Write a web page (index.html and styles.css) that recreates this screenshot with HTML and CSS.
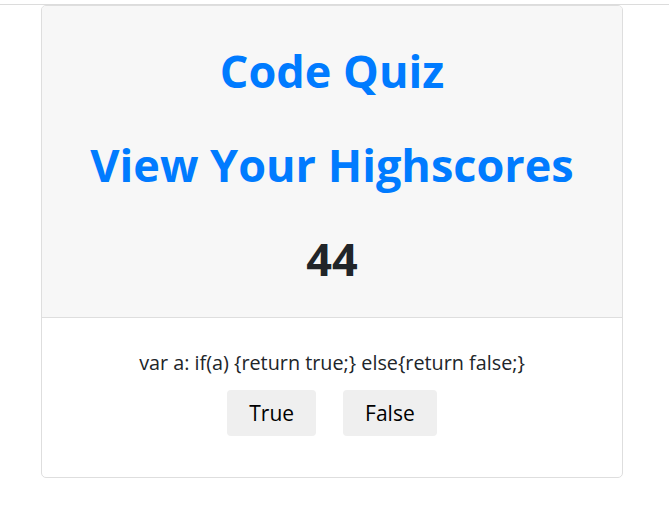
FILE: index.html
```html
<!DOCTYPE html>
<html>
<head>
<meta charset="utf-8">
<link rel="stylesheet" href="styles.css">
</head>
<body>
<div class="topbar"></div>
<div class="card">
  <div class="card-header">
    <h1 class="title">Code Quiz</h1>
    <h1 class="title">View Your Highscores</h1>
    <h1 class="score">44</h1>
  </div>
  <div class="card-body">
    <p class="question">var a: if(a) {return true;} else{return false;}</p>
    <div class="answers">
      <button class="btn btn-true">True</button>
      <button class="btn btn-false">False</button>
    </div>
  </div>
</div>
</body>
</html>
```
FILE: styles.css
```css
html, body {
  margin: 0;
  padding: 0;
  background: #fff;
  font-family: "Open Sans", "Noto Sans", sans-serif;
  color: #212529;
}
.topbar {
  height: 4px;
  border-bottom: 1px solid #dcdcdc;
}
.card {
  margin-left: 41px;
  width: 580px;
  border: 1px solid #dedede;
  border-radius: 5px;
  overflow: hidden;
}
.card-header {
  background: #f7f7f7;
  border-bottom: 1px solid #dedede;
  padding: 36px 0 29px;
  display: flex;
  flex-direction: column;
  align-items: center;
  gap: 36px;
}
.card-header h1 {
  margin: 0;
  font-size: 45px;
  line-height: 58px;
  font-weight: 700;
}
.title { color: #007bff; }
.score { color: #212529; }
.card-body {
  padding: 30px 0 41px;
  display: flex;
  flex-direction: column;
  align-items: center;
  gap: 12px;
}
.question {
  margin: 0;
  font-size: 19.8px;
  line-height: 30px;
}
.answers {
  display: flex;
  gap: 27px;
}
.btn {
  font-family: inherit;
  font-size: 21px;
  color: #000;
  background: #efefef;
  border: none;
  border-radius: 4px;
  height: 46px;
  padding: 0 22px;
}
```
